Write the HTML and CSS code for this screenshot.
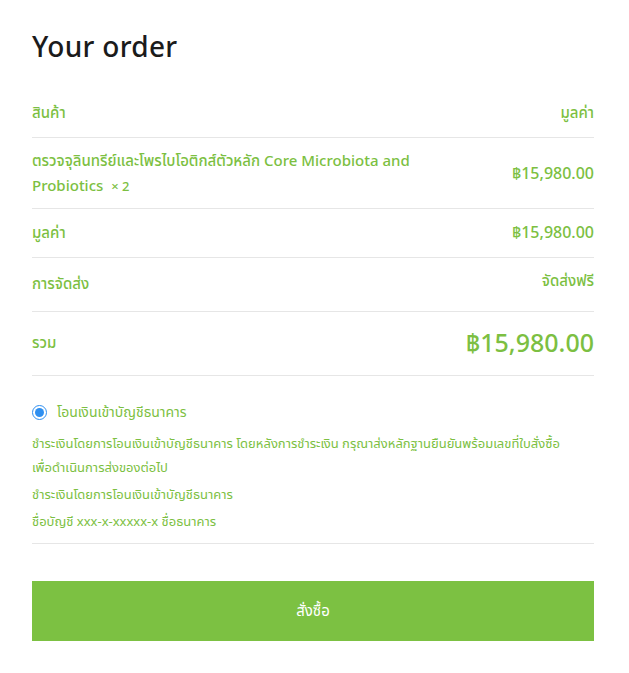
FILE: index.html
```html
<!DOCTYPE html>
<html lang="th">
<head>
  <meta charset="UTF-8">
  <title>Your order</title>
  <link rel="stylesheet" href="styles.css">
</head>
<body>

  <div class="order">
    <h3 class="order-title">Your order</h3>

    <table class="order-table">
      <thead>
        <tr>
          <th class="col-name">สินค้า</th>
          <th class="col-total">มูลค่า</th>
        </tr>
      </thead>
      <tbody>
        <tr class="cart-item">
          <td class="col-name">ตรวจจุลินทรีย์และโพรไบโอติกส์ตัวหลัก Core Microbiota and Probiotics&nbsp; <span class="qty">&times; 2</span></td>
          <td class="col-total price">฿15,980.00</td>
        </tr>
      </tbody>
      <tfoot>
        <tr>
          <th class="col-name">มูลค่า</th>
          <td class="col-total price">฿15,980.00</td>
        </tr>
        <tr class="shipping">
          <th class="col-name">การจัดส่ง</th>
          <td class="col-total">จัดส่งฟรี</td>
        </tr>
        <tr class="grand-total">
          <th class="col-name">รวม</th>
          <td class="col-total">฿15,980.00</td>
        </tr>
      </tfoot>
    </table>

    <div class="payment">
      <label class="payment-method">
        <input type="radio" name="payment" checked>
        <span>โอนเงินเข้าบัญชีธนาคาร</span>
      </label>
      <div class="payment-box">
        <p>ชำระเงินโดยการโอนเงินเข้าบัญชีธนาคาร โดยหลังการชำระเงิน กรุณาส่งหลักฐานยืนยันพร้อมเลขที่ใบสั่งซื้อ เพื่อดำเนินการส่งของต่อไป</p>
        <p>ชำระเงินโดยการโอนเงินเข้าบัญชีธนาคาร</p>
        <p>ชื่อบัญชี xxx-x-xxxxx-x ชื่อธนาคาร</p>
      </div>
    </div>

    <button class="place-order">สั่งซื้อ</button>
  </div>

</body>
</html>
```

FILE: styles.css
```css
body {
  margin: 0;
  background: #fff;
  font-family: "Noto Sans", "Noto Sans Thai", sans-serif;
}

.order {
  width: 562px;
  padding: 28px 32px 30px;
}

.order-title {
  margin: 0 0 28px;
  font-size: 28px;
  font-weight: 500;
  color: #1b1b1b;
  line-height: 36px;
  letter-spacing: 0.3px;
}

.order-table {
  width: 100%;
  border-collapse: collapse;
  color: #7cbf42;
  font-size: 15px;
  font-weight: 500;
}

.order-table th,
.order-table td {
  padding: 0;
  text-align: left;
  vertical-align: middle;
  border-bottom: 1px solid #e6e6e6;
  font-weight: 500;
}

.order-table .col-total {
  text-align: right;
}

.order-table .price {
  font-size: 16px;
}

.order-table thead th {
  height: 43px;
  padding-bottom: 2px;
}

.cart-item td {
  padding: 10px 0 9px;
  line-height: 25px;
}

.cart-item .col-name {
  padding-right: 40px;
}

.qty {
  font-size: 13px;
}

tfoot th {
  height: 48px;
}

.shipping th {
  height: 53px;
}

.shipping td {
  vertical-align: top;
  padding-top: 12px;
}

.grand-total th {
  height: 63px;
}

.grand-total td {
  font-size: 25px;
}

.payment {
  padding: 26px 0 7px;
  border-bottom: 1px solid #e6e6e6;
  color: #7cbf42;
}

.payment-method {
  display: flex;
  align-items: center;
  gap: 10px;
  font-size: 14px;
}

.payment-method input {
  margin: 0;
  width: 15px;
  height: 15px;
  accent-color: #2f8ff0;
}

.payment-box {
  margin-top: 8px;
  padding-right: 20px;
  font-size: 13px;
  line-height: 24px;
}

.payment-box p {
  margin: 0 0 3px;
}

.place-order {
  display: block;
  width: 100%;
  height: 60px;
  margin-top: 37px;
  border: none;
  background: #7cc142;
  color: #fff;
  font-family: inherit;
  font-size: 15px;
  cursor: pointer;
}
```
